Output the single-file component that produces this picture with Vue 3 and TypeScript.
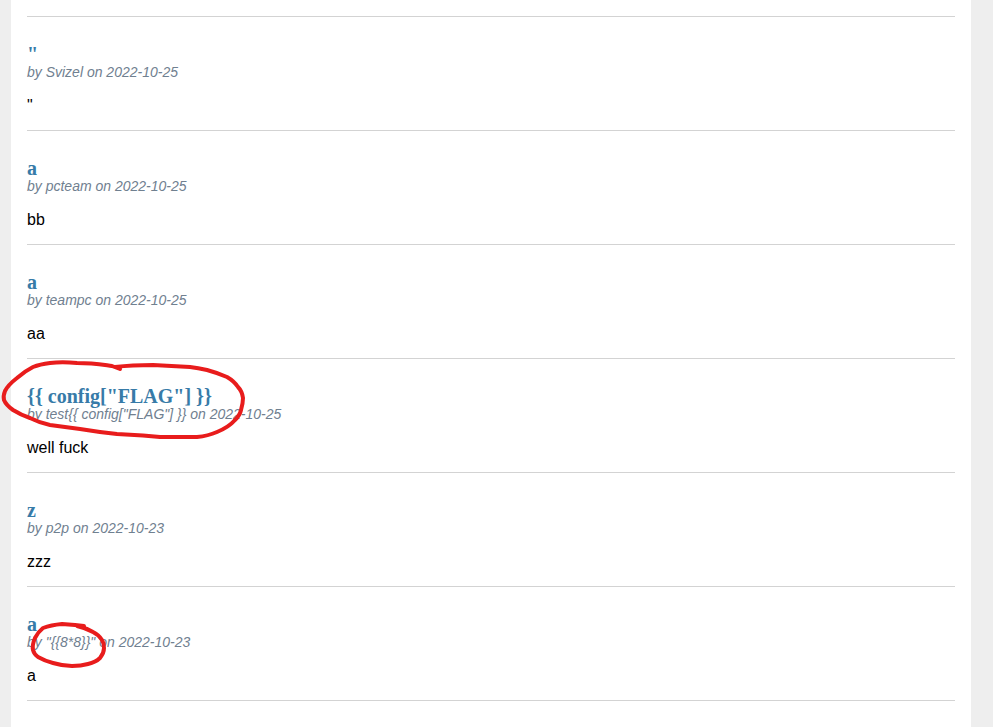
<script setup lang="ts">
interface Post {
  title: string
  author: string
  date: string
  body: string
  mark?: 'title' | 'author'
}

const posts: Post[] = [
  { title: '"', author: 'Svizel', date: '2022-10-25', body: '"' },
  { title: 'a', author: 'pcteam', date: '2022-10-25', body: 'bb' },
  { title: 'a', author: 'teampc', date: '2022-10-25', body: 'aa' },
  { title: '{{ config["FLAG"] }}', author: 'test{{ config["FLAG"] }}', date: '2022-10-25', body: 'well fuck', mark: 'title' },
  { title: 'z', author: 'p2p', date: '2022-10-23', body: 'zzz' },
  { title: 'a', author: '"{{8*8}}"', date: '2022-10-23', body: 'a', mark: 'author' },
]
</script>

<template>
  <main class="content">
    <hr />
    <template v-for="(post, i) in posts" :key="i">
      <article class="post">
        <header>
          <h1>{{ post.title }}</h1>
          <div class="about">by {{ post.author }} on {{ post.date }}</div>
        </header>
        <p class="body">{{ post.body }}</p>
        <svg v-if="post.mark === 'title'" class="mark mark-title" width="252" height="84" viewBox="0 358 252 84" aria-hidden="true">
          <path d="M120 369L112 366C104 365 94 363 77 363C67 362 58 362 50 363C42 364 38 365 33 367Q25 371 17 378Q8 385 5 391Q3 396 4 400Q6 405 13 410Q21 415 30 418Q40 423 50 425L80 429Q98 432 117 434L143 435.5L160 437H197Q208 436 217 432Q229 427 235 420Q240 415 241 410Q243 403 243 398Q242 391 238 387Q234 381 227 377Q218 373 207 370Q198 368 190 367L153 365Q132 365 115 367" />
        </svg>
        <svg v-if="post.mark === 'author'" class="mark mark-author" width="112" height="52" viewBox="0 620 112 52" aria-hidden="true">
          <path d="M84 626L75 625L62 624Q51 625 43 628Q38 632 35 638Q32 645 33 650Q34 654 38 657Q45 661 53 663Q63 666 72 666Q81 666 88 664Q96 662 100 658Q104 653 104 648Q104 643 102 640Q99 635 93 632Q86 628 77 626" />
        </svg>
      </article>
      <hr />
    </template>
  </main>
</template>

<style>
html {
  background: #eee;
  font-family: "Liberation Sans", Arial, sans-serif;
}
body {
  margin: 0;
  overflow: hidden;
}
</style>

<style scoped>
.content {
  margin: 0 22px 0 11px;
  padding: 16px 16px 40px;
  background: #fff;
}
hr {
  height: 1px;
  margin: 0;
  border: 0;
  background: #d3d3d3;
}
.post {
  position: relative;
  padding: 26px 0 14px;
}
h1 {
  margin: 0;
  color: #377ba8;
  font: bold 20px/22px "Liberation Serif", "Times New Roman", serif;
}
.about {
  color: #708090;
  font-size: 14px;
  font-style: italic;
  line-height: 14px;
}
.body {
  margin: 17px 0 0;
  font-size: 16px;
  line-height: 20px;
  color: #000;
}
.mark {
  position: absolute;
  left: -27px;
  overflow: visible;
}
.mark-title { top: -1px; }
.mark-author { top: 33px; }
.mark path {
  fill: none;
  stroke: #e81c1c;
  stroke-width: 4;
  stroke-linecap: round;
  stroke-linejoin: round;
}
</style>
